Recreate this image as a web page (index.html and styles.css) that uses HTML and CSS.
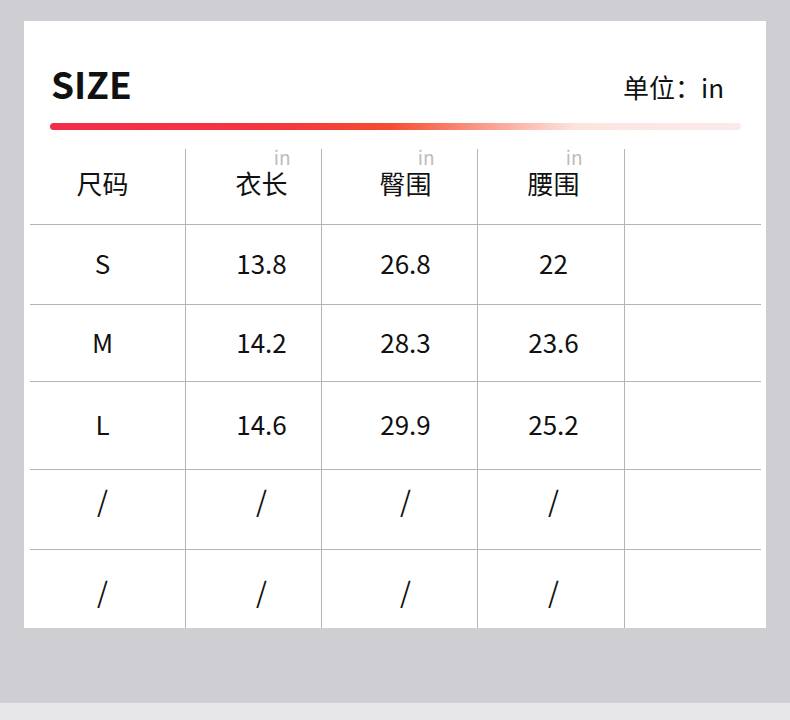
FILE: index.html
```html
<!DOCTYPE html>
<html lang="zh">
<head>
<meta charset="utf-8">
<title>SIZE</title>
<link rel="stylesheet" href="styles.css">
</head>
<body>
<div class="page">
  <div class="card">
    <div class="head">
      <h1 class="title">SIZE</h1>
      <div class="unit">单位：in</div>
    </div>
    <div class="bar"></div>
    <div class="table">
      <div class="row r1">
        <div class="cell c1"><span class="lbl">尺码</span></div>
        <div class="cell c2"><span class="lbl">衣长<span class="sup">in</span></span></div>
        <div class="cell c3"><span class="lbl">臀围<span class="sup">in</span></span></div>
        <div class="cell c4"><span class="lbl">腰围<span class="sup">in</span></span></div>
        <div class="cell c5"></div>
      </div>
      <div class="row r2">
        <div class="cell c1">S</div>
        <div class="cell c2">13.8</div>
        <div class="cell c3">26.8</div>
        <div class="cell c4">22</div>
        <div class="cell c5"></div>
      </div>
      <div class="row r3">
        <div class="cell c1">M</div>
        <div class="cell c2">14.2</div>
        <div class="cell c3">28.3</div>
        <div class="cell c4">23.6</div>
        <div class="cell c5"></div>
      </div>
      <div class="row r4">
        <div class="cell c1">L</div>
        <div class="cell c2">14.6</div>
        <div class="cell c3">29.9</div>
        <div class="cell c4">25.2</div>
        <div class="cell c5"></div>
      </div>
      <div class="row r5">
        <div class="cell c1">/</div>
        <div class="cell c2">/</div>
        <div class="cell c3">/</div>
        <div class="cell c4">/</div>
        <div class="cell c5"></div>
      </div>
      <div class="row r6">
        <div class="cell c1">/</div>
        <div class="cell c2">/</div>
        <div class="cell c3">/</div>
        <div class="cell c4">/</div>
        <div class="cell c5"></div>
      </div>
    </div>
  </div>
</div>
<div class="strip"></div>
</body>
</html>
```

FILE: styles.css
```css
html, body {
  margin: 0;
  padding: 0;
}
body {
  background: #cfced3;
  font-family: "Noto Sans CJK SC", "Noto Sans", sans-serif;
  color: #111111;
}
.page {
  height: 703px;
  box-sizing: border-box;
  padding: 21px 0 0 24px;
}
.card {
  width: 742px;
  height: 607px;
  background: #ffffff;
  overflow: hidden;
}
.head {
  height: 83px;
  display: flex;
  justify-content: space-between;
  align-items: flex-end;
  padding: 0 41px 0 27px;
}
.title {
  margin: 0 0 2px 0;
  font-size: 37px;
  font-weight: 700;
  line-height: 1;
}
.unit {
  font-size: 26px;
  line-height: 1;
  margin-bottom: 4px;
  margin-right: 1px;
}
.bar {
  margin: 19px 25px 0 26px;
  height: 7px;
  border-radius: 4px;
  background: linear-gradient(90deg, #f22d4b 0%, #f4363e 32%, #f54c32 49%, #f87a62 57%, #fbaea0 66%, #fce3df 76%, #fbeaea 100%);
}
.table {
  margin: 19px 0 0 6px;
  width: 731px;
}
.row {
  display: grid;
  grid-template-columns: 156px 136px 156px 147px 136px;
  box-sizing: border-box;
  font-size: 26px;
  line-height: 1;
}
.row + .row {
  border-top: 1px solid #b4b4b4;
}
.cell {
  display: flex;
  align-items: center;
  justify-content: center;
  box-sizing: border-box;
  border-right: 1px solid #b4b4b4;
}
.cell.c5 {
  border-right: 0;
}
.c1 { padding-right: 10px; }
.c2 { padding-left: 16px; }
.c3 { padding-left: 12px; }
.c4 { padding-left: 5px; }
.r1 { height: 75px; }
.r1 .cell { padding-bottom: 8px; }
.r2 { height: 80px; }
.r3 { height: 77px; }
.r4 { height: 88px; }
.r5 { height: 80px; }
.r6 { height: 79px; }
.r2 .cell { padding-bottom: 4px; }
.r3 .cell { padding-bottom: 3px; }
.r4 .cell { padding-bottom: 3px; }
.r5 .cell { padding-bottom: 20px; }
.r6 .cell { padding-top: 4px; }
.r5, .r6 { font-size: 28px; }
.lbl {
  position: relative;
  display: inline-block;
}
.sup {
  position: absolute;
  right: -3px;
  top: -23px;
  font-size: 19px;
  color: #bcbcbc;
  line-height: 1;
}
.strip {
  height: 17px;
  background: #e7e7ea;
}
```
